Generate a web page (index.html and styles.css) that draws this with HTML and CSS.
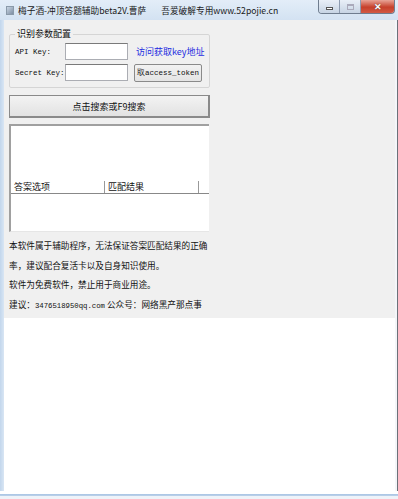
FILE: index.html
```html
<!DOCTYPE html>
<html lang="zh">
<head>
<meta charset="utf-8">
<link rel="stylesheet" href="styles.css">
</head>
<body>
<div class="window">
  <div class="titlebar">
    <div class="appicon"></div>
    <div class="title">梅子酒-冲顶答题辅助beta2V.曹萨<span class="gap"></span>吾爱破解专用www.52pojie.cn</div>
    <div class="controls">
      <div class="btn min"><span class="bar"></span></div>
      <div class="btn max"><span class="box"></span></div>
      <div class="btn close">✕</div>
    </div>
  </div>
  <div class="body">
    <div class="frame-left"></div>
    <div class="client">
      <div class="panel">
        <fieldset class="group">
          <legend>识别参数配置</legend>
          <div class="row">
            <span class="lbl">API Key:</span>
            <span class="input"></span>
            <span class="link">访问获取key地址</span>
          </div>
          <div class="row">
            <span class="lbl">Secret Key:</span>
            <span class="input"></span>
            <span class="sbtn">取access_token</span>
          </div>
        </fieldset>
        <div class="bigbtn">点击搜索或F9搜索</div>
        <div class="memo"></div>
        <div class="listview">
          <div class="lvhead">
            <span class="col c1">答案选项</span>
            <span class="col c2">匹配结果</span>
            <span class="col c3"></span>
          </div>
        </div>
        <p class="note first">本软件属于辅助程序，无法保证答案匹配结果的正确率，建议配合复活卡以及自身知识使用。</p>
        <p class="note">软件为免费软件，禁止用于商业用途。</p>
        <p class="note">建议：<span class="mono">3476518950qq.com</span> 公众号：网络黑产那点事</p>
      </div>
      <div class="blank"></div>
    </div>
    <div class="frame-right"></div>
  </div>
  <div class="bottom"></div>
</div>
</body>
</html>
```
FILE: styles.css
```css
* { box-sizing: border-box; }
html, body { margin: 0; padding: 0; }
body { width: 398px; height: 499px; background: #fff; font-family: "Noto Sans CJK SC", "Liberation Sans", sans-serif; overflow: hidden; }
.window { width: 398px; height: 499px; display: flex; flex-direction: column; }
.titlebar { height: 20px; flex: none; display: flex; align-items: center; background: linear-gradient(#e3edf8, #d3e2f2); position: relative; }
.appicon { width: 8px; height: 9px; margin-left: 6px; margin-right: 4px; background: linear-gradient(135deg, #c9d6e4, #7d8ea3); border: 1px solid #8a9aaa; }
.title { font-size: 8.7px; color: #1a1a1a; white-space: nowrap; }
.gap { display: inline-block; width: 15px; }
.controls { margin-left: auto; margin-right: 3px; align-self: flex-start; display: flex; height: 14px; border: 1px solid #6f7d8f; border-top: none; border-radius: 0 0 4px 4px; overflow: hidden; }
.btn { height: 13px; display: flex; align-items: center; justify-content: center; }
.min, .max { width: 21px; background: linear-gradient(#e9eff7, #c7d4e4); border-right: 1px solid #8d9bb0; }
.bar { width: 7px; height: 3px; background: #fff; border: 1px solid #555; margin-top: 4px; }
.box { width: 7px; height: 6px; border: 1px solid #aab; border-top-width: 2px; }
.close { width: 33px; background: linear-gradient(#e8a497, #c6402b 55%, #d25a45); color: #fff; font-size: 9px; font-weight: bold; text-shadow: 0 0 1px #333; }
.body { flex: 1; display: flex; }
.frame-left { width: 4px; background: linear-gradient(90deg, #c2d6ec, #d9e6f4); flex: none; }
.frame-right { background: #f4f6f9; border-right: 1px solid #6b7179; flex: none; width: 3px; }
.client { flex: 1; display: flex; flex-direction: column; }
.panel { background: #f0f0f0; padding: 9px 0 0 5px; height: 298px; }
.blank { flex: 1; background: #fff; }
.bottom { height: 8px; background: linear-gradient(#ffffff, #ffffff 3px, #a8c4e4 3px, #bcd2ea 5px, #eef3f9 5px); flex: none; }
.group { width: 201px; margin: 0; padding: 2px 0 4px 5px; border: 1px solid #d5d5d5; border-radius: 2px; }
.group legend { font-size: 9px; padding: 0 2px; margin-left: 0; color: #111; line-height: 10px; }
.row { display: flex; align-items: center; height: 21px; }
.lbl { font-family: "Liberation Mono", monospace; font-size: 7.5px; width: 50px; color: #111; }
.input { width: 63px; height: 17px; background: #fff; border: 1px solid #abadb3; border-top-color: #7a7a7a; }
.link { margin-left: 8px; font-size: 9px; color: #1c2ce0; white-space: nowrap; }
.sbtn { margin-left: 6px; width: 68px; height: 18px; border: 1px solid #8a8a8a; border-radius: 2px; background: linear-gradient(#f2f2f2, #e4e4e4); font-family: "Liberation Mono", monospace; font-size: 7.5px; display: flex; align-items: center; justify-content: center; color: #111; }
.bigbtn { margin-top: 7px; width: 201px; height: 23px; border: 1px solid #8a8a8a; border-right-width: 2px; border-bottom-width: 2px; background: linear-gradient(#f3f3f3, #e2e2e2); font-size: 9px; display: flex; align-items: center; justify-content: center; color: #111; }
.memo { margin-top: 6px; width: 200px; height: 57px; background: #fff; border-top: 2px solid #a0a0a0; border-left: 2px solid #a0a0a0; }
.listview { width: 200px; height: 51px; background: #fff; border-left: 2px solid #a0a0a0; border-bottom: 1px solid #e6e6e6; }
.lvhead { display: flex; height: 13px; border-bottom: 1px solid #888; background: #fff; }
.col { font-size: 9px; line-height: 12px; padding-left: 3px; border-right: 1px solid #999; height: 12px; overflow: hidden; color: #111; white-space: nowrap; }
.c1 { width: 94px; }
.c2 { width: 94px; }
.c3 { width: 10px; border-right: none; }
.note { margin: 0; font-size: 8.65px; line-height: 19.5px; width: 206px; color: #111; }
.note.first { margin-top: 4px; }
.mono { font-family: "Liberation Mono", monospace; font-size: 7.3px; }
```
